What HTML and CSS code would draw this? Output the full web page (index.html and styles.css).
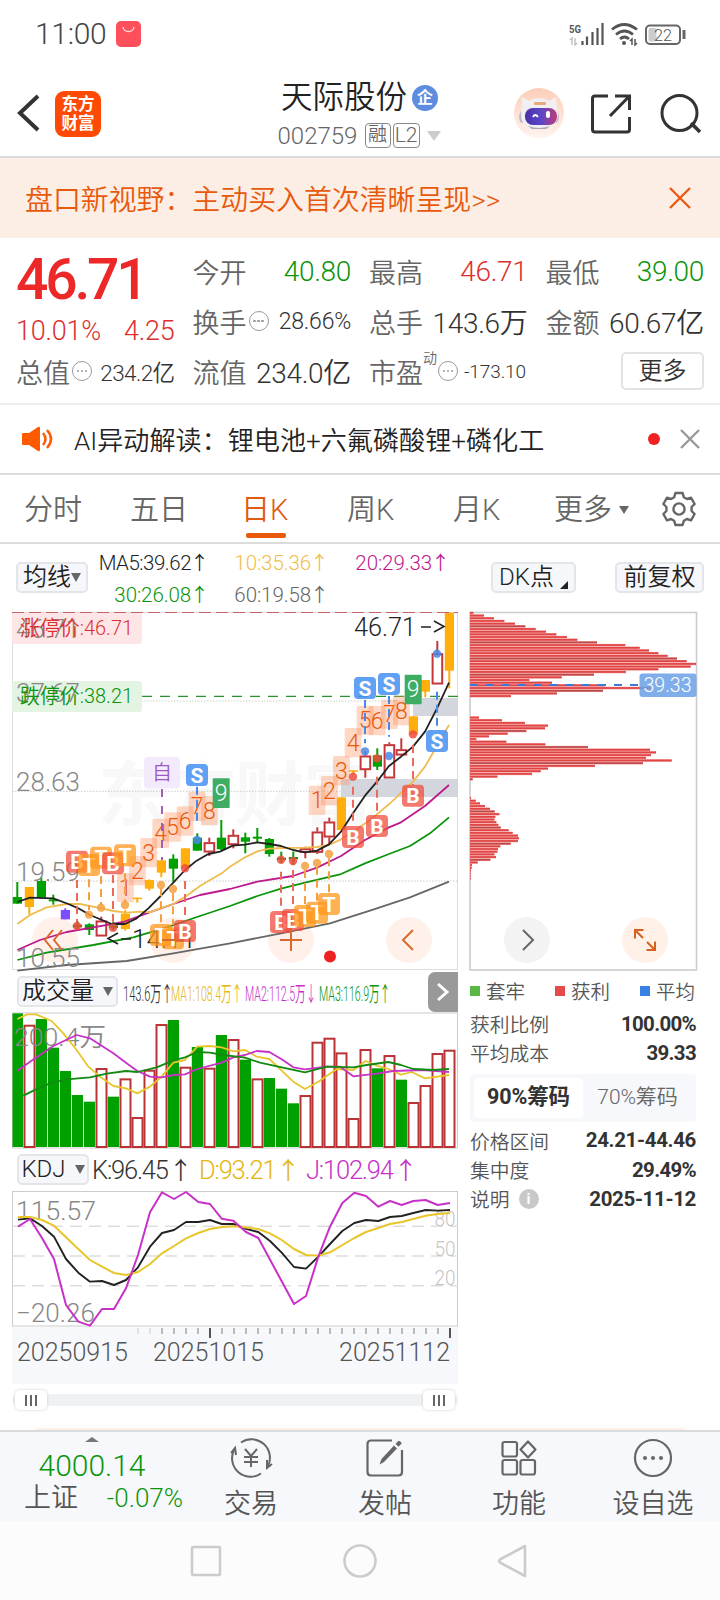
FILE: index.html
```html
<!DOCTYPE html>
<html lang="zh-CN">
<head>
<meta charset="utf-8">
<title>天际股份 002759</title>
<link rel="stylesheet" href="styles.css">
</head>
<body>
<div class="phone">
  <div class="status">
    <span class="clock">11:00</span>
    <svg class="bag" width="25" height="26" viewBox="0 0 25 26"><rect width="25" height="26" rx="5" fill="#fd4f5c"/><path d="M7 6c1 6 10 6 11 0" fill="none" stroke="#ffe3d8" stroke-width="1.3"/></svg>
    <svg class="signals" width="120" height="26" viewBox="568 21 120 26">
      <text x="569" y="33" font-size="11" font-weight="700" textLength="12" lengthAdjust="spacingAndGlyphs" fill="#555">5G</text>
      <path d="M570 40l2-2v7M575 38v7l2-2" stroke="#bbb" stroke-width="1.3" fill="none"/>
      <path d="M582.500 41v4M587 36.500v8.500M592.500 32v13M597.500 28v17M602.500 23v22" stroke="#555" stroke-width="2.200"/>
      <path d="M612 29.500q12-10 25 0M616 34.500q8.500-7 17 0M620 39q4.500-4 9 0" fill="none" stroke="#555" stroke-width="2.800"/><circle cx="624" cy="43" r="2" fill="#555"/>
      <path d="M630 41l2-2v6M635 39v6l2-2" stroke="#555" stroke-width="1.500" fill="none"/>
      <rect x="646" y="25.500" width="34" height="18.500" rx="4" fill="none" stroke="#666" stroke-width="2"/><rect x="648.500" y="28" width="8" height="13.500" rx="2" fill="#ccc"/><path d="M684 30v9" stroke="#666" stroke-width="3"/>
      <text x="654" y="40.500" font-size="17" textLength="18" lengthAdjust="spacingAndGlyphs" fill="#555">22</text>
    </svg>
  </div>

  <header class="header">
    <svg class="back" width="24" height="40" viewBox="16 93 24 40"><path d="M38 96L20 113l18 17" fill="none" stroke="#333" stroke-width="4"/></svg>
    <div class="logo">东方<br>财富</div>
    <div class="stock">
      <div class="stock-name">天际股份<span class="corp">企</span></div>
      <div class="stock-code"><span class="code">002759</span><span class="tag">融</span><span class="tag tag-l2">L2</span><i class="caret"></i></div>
    </div>
    <svg class="robot" width="50" height="50" viewBox="0 0 50 50">
      <defs><linearGradient id="rb" x2="0" y2="1"><stop stop-color="#fcceb8"/><stop offset="1" stop-color="#fff3ee"/></linearGradient><linearGradient id="rf"><stop stop-color="#4b2fa8"/><stop offset=".5" stop-color="#5a48c8"/><stop offset="1" stop-color="#c03a75"/></linearGradient></defs>
      <circle cx="25" cy="25" r="25" fill="url(#rb)"/><path d="M7 23q-4 6 0 12l5-1V22zM43 23q4 6 0 12l-5-1V22z" fill="#b9bac6"/>
      <path d="M8 12q-2-5 2-2l5 3q10-6 20 0l5-3q4-2 2 3l2 14q-1 14-19 14T7 26z" fill="#f1eff2"/><path d="M14 38q11 4 22 0l-4 3H18z" fill="#a8a8b4"/>
      <rect x="20" y="14" width="12" height="3" rx="1" fill="#e9aa78"/><rect x="11" y="20" width="32" height="17" rx="8" fill="url(#rf)"/><path d="M19 29q2-4 5 0" fill="none" stroke="#fff" stroke-width="1.800"/><rect x="32" y="23" width="4" height="7" rx="2" fill="#fff"/></svg>
    <svg class="share" width="42" height="42" viewBox="590 92 42 42"><path d="M608 95h-13q-2.500 0-2.500 2.500v31q0 2.500 2.500 2.500h32q2.500 0 2.500-2.500V116M615 95h14.500v14M629 95.500L610 115" fill="none" stroke="#333" stroke-width="3"/></svg>
    <svg class="search" width="42" height="42" viewBox="660 92 42 42"><circle cx="679.500" cy="112" r="17.500" fill="none" stroke="#333" stroke-width="3"/><path d="M691 122l9 9" stroke="#333" stroke-width="3.500"/></svg>
  </header>

  <div class="banner"><span>盘口新视野：主动买入首次清晰呈现&gt;&gt;</span><svg width="24" height="24" viewBox="0 0 24 24"><path d="M2 2l20 20M22 2L2 22" stroke="#e8590c" stroke-width="2.300"/></svg></div>

  <section class="quote">
    <div class="price"><div class="last">46.71</div><div class="change"><span>10.01%</span><span>4.25</span></div></div>
    <div class="cell"><label>今开</label><b class="green">40.80</b></div>
    <div class="cell"><label>最高</label><b class="red">46.71</b></div>
    <div class="cell"><label>最低</label><b class="green">39.00</b></div>
    <div class="cell"><label>换手</label><i class="more"></i><b class="small">28.66%</b></div>
    <div class="cell"><label>总手</label><b>143.6<em>万</em></b></div>
    <div class="cell"><label>金额</label><b>60.67<em>亿</em></b></div>
    <div class="cell"><label>总值</label><i class="more"></i><b class="small s2">234.2<em>亿</em></b></div>
    <div class="cell"><label>流值</label><b>234.0<em>亿</em></b></div>
    <div class="cell"><label>市盈</label><sup>动</sup><i class="more"></i><b class="tiny">-173.10</b></div>
    <div class="cell last-cell"><span class="more-btn">更多</span></div>
  </section>

  <div class="notice">
    <svg width="32" height="26" viewBox="0 0 32 26"><path d="M1 7h6l9-6q2-1 2 1v22q0 2-2 1l-9-6H1q-1 0-1-1V8q0-1 1-1z" fill="#ff5a00"/><path d="M21 7q5 6 0 12M25 4q8 9 0 18" fill="none" stroke="#ff5a00" stroke-width="2.500"/></svg>
    <span class="notice-text">AI异动解读：锂电池+六氟磷酸锂+磷化工</span>
    <i class="dot"></i>
    <svg class="notice-close" width="22" height="22" viewBox="0 0 22 22"><path d="M2 2l18 18M20 2L2 20" stroke="#999" stroke-width="2.400"/></svg>
  </div>

  <nav class="tabs">
    <span>分时</span><span>五日</span><span class="active">日K</span><span>周K</span><span>月K</span><span>更多<i></i></span>
    <svg width="36" height="36" viewBox="-18 -18 36 36"><path d="M-3.600-16H3.600L4.800-11.800L8-10L12-11.300L15.600-5L12.600-2V2L15.600 5L12 11.300L8 10L4.800 11.800L3.600 16H-3.600L-4.800 11.800L-8 10L-12 11.300L-15.600 5L-12.600 2V-2L-15.600-5L-12-11.300L-8-10L-4.800-11.800Z" fill="none" stroke="#666" stroke-width="2.400" stroke-linejoin="round"/><circle r="5.600" fill="none" stroke="#666" stroke-width="2.400"/></svg>
  </nav>

  <div class="ma-row">
    <span class="btn btn-ma">均线<i class="tri"></i></span>
    <div class="ma-grid">
      <span style="color:#222">MA5:39.62<u>↑</u></span><span style="color:#efbd4b">10:35.36<u>↑</u></span><span style="color:#bd1a8d">20:29.33<u>↑</u></span>
      <span style="color:#0b950b">30:26.08<u>↑</u></span><span style="color:#666">60:19.58<u>↑</u></span>
    </div>
    <span class="btn btn-dk">DK点<i></i></span><span class="btn btn-fq">前复权</span>
  </div>

  <main class="charts">
    <div class="left">
      <svg id="kline" width="460" height="362" viewBox="0 610 460 362"></svg>
      <div class="vol-head"><span class="btn btn-vol">成交量<i class="tri"></i></span>
        <div class="vol-values"><span class="v0">143.6万↑</span><span class="v1">MA1:108.4万↑</span><span class="v2">MA2:112.5万↓</span><span class="v3">MA3:116.9万↑</span></div>
        <span class="next"><svg width="14" height="20" viewBox="0 0 14 20"><path d="M2 2l9 8-9 8" fill="none" stroke="#fff" stroke-width="3"/></svg></span></div>
      <svg id="volume" width="460" height="137" viewBox="0 1012 460 137"></svg>
      <div class="kdj-head"><span class="btn btn-kdj">KDJ<i class="tri"></i></span><span class="k">K:96.45<u>↑</u></span><span class="d">D:93.21<u>↑</u></span><span class="j">J:102.94<u>↑</u></span></div>
      <svg id="kdj" width="460" height="137" viewBox="0 1190 460 137"></svg>
      <div class="dates"><svg id="ticks" width="446" height="12" viewBox="12 1327 446 12"></svg><div class="date-labels"><span>20250915</span><span>20251015</span><span>20251112</span></div></div>
      <div class="slider"><span class="handle"><i></i><i></i><i></i></span><span class="handle"><i></i><i></i><i></i></span></div>
    </div>
    <aside class="right">
      <svg id="chips" width="230" height="362" viewBox="468 610 230 362"></svg>
      <div class="legend"><span><i style="background:#5ab946"></i>套牢</span><span><i style="background:#e44a4a"></i>获利</span><span><i style="background:#3681e2"></i>平均</span></div>
      <div class="stat"><label>获利比例</label><b>100.00%</b></div>
      <div class="stat"><label>平均成本</label><b>39.33</b></div>
      <div class="toggle"><span class="on">90%筹码</span><span>70%筹码</span></div>
      <div class="stat"><label>价格区间</label><b class="range">24.21-44.46</b></div>
      <div class="stat"><label>集中度</label><b>29.49%</b></div>
      <div class="stat"><label>说明<i class="info">i</i></label><b class="range">2025-11-12</b></div>
    </aside>
  </main>
  <div class="peek"></div>

  <footer class="toolbar">
    <div class="index"><i></i><div class="idx-value">4000.14</div><div class="idx-row"><span>上证</span><b>-0.07%</b></div></div>
    <div class="tool"><svg width="46" height="42" viewBox="-23 -21 46 42"><g fill="none" stroke="#666" stroke-width="2"><path d="M-10-15.500A18.500 18.500 0 0 1 17 8M10 15.500A18.500 18.500 0 0 1-17-8"/><path d="M-20-5l4-5 1 7M21 6l-5 4 0-8"/><path d="M-6-9L0-2 6-9M0-2V9M-7-1H7M-7 4H7"/></g></svg><span>交易</span></div>
    <div class="tool"><svg width="46" height="42" viewBox="-23 -21 46 42"><path d="M7-17.500H-14q-3.500 0-3.500 3.500v28q0 3.500 3.500 3.500H13.500q3.500 0 3.500-3.500V-8" fill="none" stroke="#666" stroke-width="2.200"/><path d="M-5.500 6.500l2-5.500L9-12.500l3 3L-1 4zM10.500-14l3-3.200q2 0 3.300 2.500l-3.200 3.500z" fill="#666"/></svg><span>发帖</span></div>
    <div class="tool"><svg width="46" height="42" viewBox="-23 -21 46 42"><g fill="none" stroke="#666" stroke-width="2.200"><rect x="-16.500" y="-16" width="14.500" height="14.500" rx="2"/><rect x="-16.500" y="2" width="14.500" height="14.500" rx="2"/><rect x="1.500" y="2" width="14.500" height="14.500" rx="2"/><path d="M9-16.500l7.500 8L9-.5 1.500-8.500z" stroke-linejoin="round"/></g></svg><span>功能</span></div>
    <div class="tool"><svg width="46" height="42" viewBox="-23 -21 46 42"><circle r="18" fill="none" stroke="#666" stroke-width="2.200"/><circle cx="-8" r="2" fill="#666"/><circle r="2" fill="#666"/><circle cx="8" r="2" fill="#666"/></svg><span>设自选</span></div>
  </footer>
  <div class="sysnav"><svg width="720" height="79" viewBox="0 1521 720 79"><g fill="none" stroke="#ccc" stroke-width="2.600" stroke-linejoin="round"><rect x="192" y="1547" width="28" height="28" rx="1"/><circle cx="360" cy="1561" r="15.500"/><path d="M525 1546v30l-25-13.500q-2-1.500 0-3z"/></g></svg></div>
</div>
<script src="charts.js"></script>
</body>
</html>
```

FILE: styles.css
```css
* { box-sizing: border-box; }
body { margin: 0; background: #fff; }
.phone { width: 720px; height: 1600px; overflow: hidden; background: #fff; color: #333; font-family: Roboto, "Noto Sans CJK SC", sans-serif; font-weight: 350; display: flex; flex-direction: column; }
svg { display: block; flex: none; }
svg text { font-family: Roboto, "Noto Sans CJK SC", sans-serif; }
i, em { font-style: normal; }
b { font-weight: 350; }
u { text-decoration: none; }

.status { height: 68px; padding: 0 32px 0 35px; display: flex; align-items: center; flex: none; }
.clock { font-size: 30px; line-height: 30px; width: 74px; letter-spacing: -.3px; color: #444; }
.bag { margin-left: 7px; }
.signals { margin-left: auto; }

.header { height: 90px; border-bottom: 2px solid #d9dbde; display: flex; align-items: flex-start; padding: 25px 18px 0 16px; flex: none; }
.logo { width: 46px; height: 46px; margin: -2px 0 0 15px; border-radius: 9px; background: #ff4a05; color: #fff; font-weight: 700; font-size: 16.500px; line-height: 19px; padding-top: 4px; text-align: center; }
.stock { width: 200px; margin: -14px 0 0 158px; display: flex; flex-direction: column; align-items: center; flex: none; }
.stock-name { display: flex; align-items: center; font-size: 31.500px; line-height: 38px; color: #222; padding-left: 1px; }
.corp { width: 26px; height: 26px; border-radius: 50%; background: #5d8de0; color: #fff; font-size: 16px; font-weight: 700; line-height: 25px; text-align: center; margin-left: 5px; }
.stock-code { display: flex; align-items: center; height: 37px; font-size: 24px; color: #666; }
.code { width: 82px; }
.tag { width: 26px; height: 25px; border: 1.500px solid #888; border-radius: 4px; font-size: 19px; line-height: 22px; text-align: center; margin-left: 5px; }
.tag-l2 { width: 27px; margin-left: 2px; font-size: 21px; line-height: 23px; }
.caret { border: 7.500px solid transparent; border-top: 10px solid #ccc; border-bottom: 0; margin-left: 7px; }
.robot { margin: -5px 0 0 auto; }
.share { margin-left: 26px; }
.search { margin-left: 28px; }

.banner { height: 80px; background: #fdeee5; padding: 0 28px 0 25px; display: flex; align-items: center; justify-content: space-between; font-size: 27.900px; color: #e8590c; flex: none; }

.quote { height: 167px; border-bottom: 2px solid #eee; padding: 8px 16px 0 16px; display: grid; grid-template-columns: repeat(4, 158.500px); grid-template-rows: repeat(3, 50px); column-gap: 18px; flex: none; }
.price { grid-row: span 2; color: #ec2828; }
.last { font-size: 57px; line-height: 67px; font-weight: 500; letter-spacing: -3.200px; }
.change { display: flex; justify-content: space-between; font-size: 27px; line-height: 36px; letter-spacing: -.2px; color: #dc3030; }
.cell { display: flex; align-items: center; font-size: 27px; color: #666; white-space: nowrap; }
.cell b { margin-left: auto; color: #333; font-size: 28px; letter-spacing: -.3px; }
.cell b.small { font-size: 23px; letter-spacing: -.2px; }
.cell b.s2 { font-size: 22.500px; letter-spacing: -.6px; }
.cell b.tiny { font-size: 19px; margin-left: 6px; letter-spacing: -.1px; }
.cell b.green { color: #0b950b; }
.cell b.red { color: #dc3030; }
.more { width: 20px; height: 20px; border: 1.600px solid #999; border-radius: 50%; margin-left: 2px; display: flex; align-items: center; justify-content: center; }
.more::after { content: ""; width: 2.500px; height: 2.500px; border-radius: 50%; background: #999; box-shadow: -4px 0 #999, 4px 0 #999; }
.cell sup { font-size: 14px; line-height: 16px; align-self: flex-start; margin-top: 4px; }
.cell sup + .more { margin-left: 1px; }
.last-cell { justify-content: flex-end; }
.more-btn { width: 83px; height: 38px; border: 2px solid #e3e3e3; border-radius: 5px; font-size: 24px; line-height: 34px; text-align: center; color: #333; }

.notice { height: 70px; border-bottom: 2px solid #dcdcdc; padding: 0 19px 0 22px; display: flex; align-items: center; flex: none; }
.notice-text { font-size: 26.100px; margin-left: 20px; color: #222; }
.dot { width: 12px; height: 12px; border-radius: 50%; background: #ee2222; margin-left: auto; }
.notice-close { margin-left: 19px; }

.tabs { height: 69px; border-bottom: 2px solid #dcdcdc; position: relative; padding: 0 23px 0 24px; display: flex; align-items: center; font-size: 29px; color: #666; flex: none; }
.tabs span { line-height: 66px; height: 67px; width: 106px; padding-top: 2px; display: flex; align-items: center; }
.tabs .active { color: #e05a10; position: relative; padding-left: 5px; }
.tabs span:nth-child(4) { padding-left: 5px; }
.tabs span:nth-child(5) { padding-left: 5px; }
.tabs .active::after { content: ""; position: absolute; left: 10px; bottom: 4px; width: 40px; height: 5px; border-radius: 2px; background: #e8590c; }
.tabs span i { border: 5px solid transparent; border-top: 8px solid #666; border-bottom: 0; margin-left: 7px; }
.tabs svg { margin-left: auto; }

.ma-row { height: 66px; display: flex; align-items: flex-start; padding: 0 16px; flex: none; }
.btn { height: 31px; background: #f6f7fa; border: 2px solid #e3e5e9; border-radius: 5px; color: #222; font-size: 24px; line-height: 27px; display: flex; align-items: center; justify-content: center; white-space: nowrap; flex: none; }
.tri { border: 5px solid transparent; border-top: 9px solid #666; border-bottom: 0; }
.btn-ma { width: 72px; margin-top: 18px; }
.ma-grid { width: 375px; margin-left: 9px; padding-top: 2px; display: grid; grid-template-columns: 108px 120px 121px; grid-auto-rows: 32px; align-items: center; font-size: 20.500px; line-height: 30px; letter-spacing: -.1px; text-align: right; white-space: nowrap; }
.ma-grid span:first-child { letter-spacing: -.5px; margin-left: -6px; }
.ma-grid u { display: inline-block; width: 15px; font-size: 19px; text-align: right; font-family: "Noto Sans CJK SC"; letter-spacing: 0; margin-left: -1px; }
.btn-dk { width: 85px; margin: 18px 0 0 19px; }
.btn-dk i { border-left: 8px solid transparent; border-bottom: 8px solid #222; margin: 14px 0 0 6px; }
.btn-fq { width: 89px; margin: 18px 0 0 39px; }

.charts { height: 819px; display: flex; flex: none; }
.left { width: 460px; flex: none; }
.right { width: 230px; margin-left: 8px; }
.vol-head { height: 40px; display: flex; align-items: center; padding: 0 2px 0 17px; }
.btn-vol { width: 101px; margin-top: -1px; }
.btn-vol .tri, .btn-kdj .tri { margin-left: 9px; }
.vol-values { flex: 1; display: grid; grid-template-columns: 48px 74px 74px 80px; padding-left: 5px; font-size: 21px; }
.vol-values span { white-space: nowrap; transform-origin: 0 50%; width: 0; transform: scaleX(.505); }
.vol-values .v0 { color: #333; transform: scaleX(.53); }
.v1 { color: #e3b510; }
.v2 { color: #c831c8; }
.v3 { color: #0b950b; }
.next { width: 30px; height: 40px; background: #999; border-radius: 7px 0 0 7px; display: flex; align-items: center; justify-content: center; }
.kdj-head { height: 41px; display: flex; align-items: center; padding-left: 17px; font-size: 25.500px; }
.btn-kdj { width: 72px; }
.kdj-head u { display: inline-block; width: 20px; font-family: "Noto Sans CJK SC"; font-size: 24px; line-height: 24px; margin-left: 1px; }
.kdj-head > span:not(.btn) { line-height: 30px; white-space: nowrap; letter-spacing: -1.200px; flex: none; }
.k { margin-left: 3px; width: 107px; }
.d { color: #e3b510; width: 107px; }
.j { color: #c831c8; }
.dates { width: 446px; height: 57px; margin-left: 12px; background: #f7f8fb; }
.date-labels { display: flex; padding: 0 8px 0 5px; font-size: 25px; line-height: 27px; color: #555; }
.date-labels span:nth-child(2) { margin-left: 25px; }
.date-labels span:last-child { margin-left: auto; }
.slider { width: 446px; height: 12px; margin: 10px 0 0 12px; background: #f0f1f5; border-radius: 6px; display: flex; align-items: center; justify-content: space-between; padding: 0 3px; }
.handle { width: 32px; height: 20px; background: #fff; border-radius: 5px; box-shadow: 0 0 3px #ccc; display: flex; align-items: center; justify-content: center; gap: 3px; }
.handle i { width: 2px; height: 11px; background: #666; }

.legend { height: 37px; padding: 0 3px 0 2px; display: flex; align-items: center; justify-content: space-between; font-size: 19.500px; color: #555; }
.legend span { display: flex; align-items: center; gap: 6px; }
.legend i { width: 10px; height: 10px; }
.stat { height: 29.300px; padding: 0 2px; display: flex; align-items: center; justify-content: space-between; font-size: 19.800px; color: #555; }
.stat label { display: flex; align-items: center; }
.stat b { font-size: 20.500px; font-weight: 700; letter-spacing: -.7px; color: #333; }
.stat b.range { letter-spacing: -.35px; }
.toggle { width: 226px; height: 48px; margin: 6px 0 4px 2px; background: #f7f8fb; border-radius: 4px; padding: 4px; display: flex; align-items: center; font-size: 21px; letter-spacing: -.1px; color: #666; }
.toggle span { flex: 1; height: 40px; line-height: 38px; text-align: center; }
.toggle .on { background: #fff; border-radius: 4px; font-size: 21.500px; font-weight: 700; color: #333; }
.info { width: 20px; height: 20px; border-radius: 50%; background: #c8c8c8; color: #fff; font-size: 15px; line-height: 20px; font-weight: 700; text-align: center; margin-left: 9px; }

.peek { position: absolute; left: 28px; top: 1428px; width: 664px; height: 12px; background: #fdeee5; border-radius: 14px 14px 0 0; }
.toolbar { position: relative; height: 91px; border-top: 2px solid #d9dbde; background: #f7f8fb; display: flex; flex: none; margin-top: 1px; }
.index { width: 184px; display: flex; flex-direction: column; align-items: center; color: #0b950b; }
.index > i { border: 7px solid transparent; border-bottom: 5px solid #777; border-top: 0; margin-top: 5px; }
.idx-value { font-size: 30px; line-height: 40px; margin-top: 4px; letter-spacing: 0; }
.idx-row { width: 184px; display: flex; align-items: center; justify-content: space-between; padding: 0 1px 0 24px; line-height: 27px; margin-top: -1px; }
.idx-row span { font-size: 27px; color: #555; }
.idx-row b { font-size: 26px; letter-spacing: 0; }
.tool { width: 134px; display: flex; flex-direction: column; align-items: center; font-size: 27px; line-height: 38px; color: #555; padding-top: 5px; }
.tool span { margin-top: 6px; }
.sysnav { height: 79px; background: #fcfcfc; flex: none; }
```

FILE: charts.js
```js
// Chart coordinates are stored in thirds of a pixel, with one origin per panel.
const P = (ox, oy) => ({ x: v => +(ox + v / 3).toFixed(2), y: v => +(oy + v / 3).toFixed(2) });
const fill = (id, parts) => { document.getElementById(id).innerHTML = parts.join(''); };
const rect = (x, y, w, h, f, extra = '') => `<rect x="${x}" y="${y}" width="${w}" height="${h}" fill="${f}" ${extra}/>`;
const line = (x1, y1, x2, y2, s, extra = '') => `<path d="M${x1} ${y1}L${x2} ${y2}" stroke="${s}" fill="none" ${extra}/>`;
const text = (x, y, s, size, f, len, extra = '') => `<text x="${x}" y="${y}" font-size="${size}" fill="${f}" ${len ? `textLength="${len}" lengthAdjust="spacingAndGlyphs"` : ''} ${extra}>${s}</text>`;
const dot = (x, y, r, f) => `<circle cx="${x}" cy="${y}" r="${r}" fill="${f}"/>`;

function poly(p, pts, color, w = 1.8) {
  const n = pts.trim().split(/\s+/).map(t => t.split(',').map(Number));
  return `<polyline points="${n.map(([a, b]) => p.x(a) + ',' + p.y(b)).join(' ')}" fill="none" stroke="${color}" stroke-width="${w}" stroke-linejoin="round"/>`;
}

// ---- Daily candles ----
const K = P(0, 600);
const out = [];
const G = '#00a000', Y = '#ffae0c', R = '#c4383c', V = '#7c4dff';
out.push(rect(12.5, 612.5, 445, 357, 'none', 'stroke="#ddd"'));
out.push(`<text x="98" y="820" font-size="70" font-weight="700" fill="#f8f8f8" textLength="275">东方财富</text>`);
[701, 791.3, 881].forEach(y => out.push(line(12, y, 458, y, '#ccc', 'stroke-dasharray="1.5 1.5"')));
out.push(rect(413, 698, 45, 18, '#d3d7dd'), rect(341, 779, 117, 18, '#d3d7dd'));
[55, 173, 291, 409].forEach(x => out.push(dot(x, 940, 23, '#fff1ea')));

const candles = [
  [G, 891, 911, 846, 911], [Y, 861, 921, 861, 944], [G, 843, 893, 832, 893], [G, 898, 904, 884, 914],
  [V, 930, 958, 925, 958], [G, 974, 982, 962, 990], [G, 973, 990, 970, 1005], ['h', 962, 1009, 950, 1009],
  [G, 976, 984, 965, 992], [Y, 941, 987, 930, 992], [Y, 893, 896, 893, 908], [Y, 840, 866, 838, 872],
  [Y, 781, 818, 781, 832], [G, 776, 806, 763, 845], [Y, 745, 803, 745, 803], [G, 713, 752, 700, 752],
  ['h', 727, 757, 713, 768], [G, 713, 748, 660, 750], ['h', 705, 735, 688, 745], [G, 712, 725, 698, 760],
  [G, 710, 716, 684, 728], [G, 717, 762, 714, 770], [G, 773, 780, 755, 790], [G, 771, 778, 755, 795],
  ['h', 745, 758, 740, 775], ['h', 695, 758, 682, 762], ['h', 665, 712, 653, 735], [Y, 592, 690, 592, 690],
  [Y, 511, 515, 511, 525], ['h', 467, 510, 455, 533], [G, 466, 500, 445, 510], ['h', 433, 535, 427, 535],
  ['h', 448, 466, 415, 468], [Y, 349, 403, 349, 403], [Y, 240, 275, 240, 292], ['h', 160, 253, 123, 253], [Y, 38, 212, 38, 265]
];
candles.forEach(([c, top, bot, hi, lo], i) => {
  const x = 17.3 + 12 * i;
  if (c === 'h') {
    out.push(line(x, K.y(hi), x, K.y(top), R, 'stroke-width="2"'), line(x, K.y(bot), x, K.y(lo), R, 'stroke-width="2"'));
    out.push(rect(x - 4.7, K.y(top) + .8, 9.6, Math.max(2, (bot - top) / 3 - 1.6), '#fff', `stroke="${R}" stroke-width="2"`));
  } else {
    out.push(line(x, K.y(hi), x, K.y(lo), c, 'stroke-width="2"'));
    out.push(rect(x - 4.5, K.y(top), 9.2, Math.max(1.5, (bot - top) / 3), c));
  }
});
out.push(poly(K, '52,1112 200,1095 380,1083 520,1060 690,1030 843,1000 990,970 1110,932 1230,892 1347,845', '#666'));
out.push(poly(K, '52,1080 140,1058 280,1035 400,1012 500,982 600,948 690,918 772,888 843,866 915,848 1023,822 1095,790 1167,762 1230,738 1290,700 1347,652', '#0b950b'));
out.push(poly(K, '52,1050 120,1020 200,996 280,982 370,966 440,940 520,912 600,885 690,867 772,845 879,828 951,803 1023,768 1095,720 1167,682 1203,667 1275,618 1347,555', '#bd1a8d'));
out.push(poly(K, '52,972 90,945 140,922 200,912 240,912 290,922 340,933 380,938 420,935 450,937 480,925 520,912 560,887 600,858 630,840 665,820 690,800 735,772 772,754 808,746 850,744 915,743 951,741 987,735 1023,718 1059,695 1110,660 1170,610 1239,545 1275,500 1347,375', '#f0bc50'));
out.push(poly(K, '52,906 90,893 160,895 205,912 235,925 270,945 335,972 375,972 410,955 445,925 482,888 520,848 555,810 590,782 625,762 660,755 698,737 735,734 772,727 808,732 843,738 879,750 915,757 951,752 987,733 1023,695 1059,640 1095,587 1131,545 1167,498 1203,470 1239,440 1275,395 1311,325 1347,248', '#222'));

// Limit prices and the price axis
out.push(line(12, 612.5, 458, 612.5, '#c46464', 'stroke-dasharray="12 5"'));
out.push(line(142, 696.3, 458, 696.3, '#2b932b', 'stroke-dasharray="10 8" stroke-width="1.3"'));
out.push(rect(12, 613, 130, 31, '#ffe6e6', 'rx="3"'), rect(12, 681, 130, 31, '#e3f4e3', 'rx="3"'));
[[637.5, '46.71'], [701.5, '37.67'], [791, '28.63'], [880.5, '19.59'], [967, '10.55']]
  .forEach(([y, s]) => out.push(text(16, y, s, 26, '#888', 64, 'font-weight="350"')));
out.push(text(20, 634.5, '涨停价:46.71', 21, '#dc3030', 113), text(20, 702.5, '跌停价:38.21', 21, '#0b950b', 113));

// Nine-count numbers
[[351, 819, 1], [387, 768, 2], [421, 714, 3], [457, 656, 4], [493, 637, 5], [530, 619, 6], [566, 575, 7], [603, 588, 8],
 [926, 557, 1], [963, 528, 2], [999, 468, 3], [1034, 384, 4], [1070, 317, 5], [1106, 318, 6], [1143, 299, 7], [1179, 288, 8]]
  .forEach(([x, y, n]) => out.push(rect(K.x(x), K.y(y), 16.8, 29.3, 'rgba(255,145,95,.36)', 'rx="1.5"'), text(K.x(x) + 8.4, K.y(y) + 22.5, n, 23, '#e8590c', 0, 'font-weight="350" text-anchor="middle"')));
[[638, 535], [1214, 224]].forEach(([x, y]) => out.push(rect(K.x(x), K.y(y), 17, 29.6, '#3fac63', 'rx="1"'), text(K.x(x) + 8.5, K.y(y) + 22.5, 9, 23, '#fff', 0, 'text-anchor="middle"')));

// Low and high callouts
out.push(text(354, 635.5, '46.71', 25.5, '#222', 62, 'font-weight="350"'), `<path d="M421 627h10M434 621l10 5.500-10 5.500" fill="none" stroke="#222" stroke-width="1.600"/>`);
out.push(text(132, 947.5, '14.11', 25.5, '#222', 64, 'font-weight="350"'), `<path d="M118 933l-10 5.500 10 5.500M121 939h10" fill="none" stroke="#222" stroke-width="1.600"/>`);

// Trade markers: [type, x, label y, dash from, dash to, dot y]
const tone = { B: ['rgba(240,76,62,.75)', '#ee6a58'], T: ['rgba(255,152,28,.75)', '#f5a040'], S: ['rgba(74,148,245,.88)', '#4a88e8'] };
[['B', 231, 785, 840, 965, 978], ['T', 267, 795, 838, 930, 944], ['T', 303, 773, 828, 915, 923], ['B', 339, 790, 825, 965, 983], ['T', 375, 766, 820, 905, 915],
 ['S', 591, 525, 560, 675, 720], ['T', 483, 1005, 865, 970, 855], ['T', 519, 1015, 880, 975, 867], ['B', 555, 993, 843, 960, 805],
 ['B', 843, 966, 815, 925, 779], ['B', 879, 960, 810, 925, 783], ['T', 915, 948, 810, 915, 798], ['T', 951, 938, 800, 905, 789], ['T', 987, 912, 775, 880, 762],
 ['B', 1059, 711, 560, 675, 530], ['B', 1131, 678, 530, 640, 475], ['B', 1239, 587, 435, 555, 403],
 ['S', 1095, 264, 300, 430, 454], ['S', 1167, 252, 288, 410, 468], ['S', 1311, 423, 275, 390, 161]]
  .forEach(([t, x, ly, a, b, dy]) => {
    const cx = K.x(x), cy = K.y(ly), [bg, c] = tone[t];
    out.push(line(cx, K.y(a), cx, K.y(b), c, 'stroke-width="2" stroke-dasharray="8 5"'), `<g opacity=".85">${dot(cx, K.y(dy), 4.2, t === 'B' ? '#f04c3e' : c)}</g>`);
    out.push(rect(cx - 11, cy - 11, 22, 22, bg, 'rx="4"'), text(cx, cy + 7.5, t, 21, '#fff', 0, 'font-weight="700" text-anchor="middle"'));
  });
out.push(rect(144, 757, 36, 31.5, '#f3eafc', 'rx="4"'), text(152, 780, '自', 20, '#9b59c6', 0), line(162, 789, 162, 860, '#a35fb5', 'stroke-width="2" stroke-dasharray="8 9"'));
out.push(`<path d="M53 930L45 940l8 10M62 930L54 940l8 10M162 940h22M280 940h22M291 929v22M413 930l-10 10 10 10" fill="none" stroke="#d9692c" stroke-width="2"/>`);
out.push(dot(330, 956.5, 6, '#ee2222'));
fill('kline', out);

// ---- Volume ----
const Q = P(0, 970), vol = [];
vol.push(rect(12.5, 1013, 445, 135, 'none', 'stroke="#ccc"'));
'G130 R168 G147 G233 G303 G375 G395 R298 G380 R329 R445 R303 R166 G150 R294 G231 R297 G195 R211 G269 R329 G324 G356 G400 R379 R219 R207 R251 R448 R241 G295 R259 G329 R400 R349 R253 R243'.split(' ').forEach((s, i) => {
  const top = Q.y(+s.slice(1)), x = i === 0 ? 12.5 : 17.3 + 12 * i - 5.5, w = i === 0 ? 10.5 : 11.2;
  vol.push(s[0] === 'G' ? rect(x, top, w, 1147 - top, G) : rect(x + .7, top - .3, w - 1.2, 1147.3 - top, '#fff', 'stroke="#b93236" stroke-width="2"'));
});
vol.push(text(14, 1045.5, '200.4万', 26.5, '#888', 92, 'font-weight="350"'));
vol.push(poly(Q, '52,147 82,133 108,133 155,153 190,190 230,240 265,290 300,320 340,348 378,355 412,370 450,350 485,320 520,278 555,270 592,230 630,228 665,232 700,244 735,240 770,260 808,267 845,302 880,335 915,357 955,335 1010,297 1060,300 1097,273 1130,287 1165,297 1203,314 1235,306 1275,325 1347,315', '#e8c52a'));
vol.push(poly(Q, '52,303 90,275 160,228 230,195 270,205 340,250 378,278 412,303 450,320 485,322 520,315 555,313 592,297 665,278 700,262 735,255 770,243 808,246 845,268 880,292 915,298 980,290 1020,290 1060,319 1130,311 1180,303 1270,300 1347,306', '#c831c8'));
vol.push(poly(Q, '70,377 108,358 150,340 200,328 270,322 320,311 378,303 412,306 470,292 520,271 555,262 592,246 630,248 670,255 735,263 780,278 845,292 915,307 980,290 1060,292 1100,285 1165,276 1203,285 1240,297 1300,300 1347,297', '#128a12'));
fill('volume', vol);

// ---- KDJ ----
const J = P(0, 1180), kdj = [];
kdj.push(rect(12.5, 1191.5, 445, 134.500, 'none', 'stroke="#ccc"'));
[[139, 80], [228, 50], [317, 20]].forEach(([y, n]) => kdj.push(line(13, J.y(y), 458, J.y(y), '#ddd', 'stroke-width="1.5" stroke-dasharray="12 7"'), text(434.5, J.y(y) - .5, n, 20, '#c4c4c4', 21, 'font-weight="350"')));
kdj.push(text(16, 1219.5, '115.57', 26, '#888', 80, 'font-weight="350"'), text(16, 1321.5, '−20.26', 26, '#888', 79, 'font-weight="350"'));
kdj.push(poly(J, '54,119 90,115 126,138 162,170 198,237 235,278 270,305 306,303 342,315 378,300 414,262 450,200 486,159 522,150 558,126 595,126 630,120 665,132 700,132 735,146 775,156 810,183 845,218 882,261 918,266 955,230 990,192 1027,153 1063,129 1098,120 1135,123 1170,111 1205,108 1240,99 1277,90 1313,92 1350,90', '#222', 1.9));
kdj.push(poly(J, '54,111 90,111 126,120 162,137 198,172 235,207 270,240 306,260 342,279 378,285 414,276 450,252 486,220 522,198 558,175 595,159 630,147 665,141 710,139 775,147 810,160 845,180 882,207 918,225 955,227 990,217 1063,174 1098,156 1135,144 1170,132 1205,126 1277,107 1313,102 1350,99', '#e8c52a', 2));
kdj.push(poly(J, '54,140 90,117 126,174 162,237 198,375 235,425 270,437 306,387 342,387 378,325 414,225 450,97 486,37 522,57 558,36 595,66 630,72 665,116 700,122 738,156 775,174 882,372 918,348 955,230 990,140 1027,69 1063,38 1098,48 1135,80 1170,63 1205,75 1240,63 1277,60 1313,75 1350,69', '#c831c8', 2));
fill('kdj', kdj);

const ticks = [];
for (let i = 0; i < 27; i++) {
  const x = 138 + i * 12, major = i === 6 || i === 26;
  ticks.push(line(x, 1328, x, major ? 1338 : 1334, major ? '#555' : i < 2 ? '#ddd' : '#aaa', `stroke-width="${major ? 2 : 1.6}"`));
}
fill('ticks', ticks);

// ---- Chip distribution: [first row, bar end of each row] ----
const C = P(460, 600), chips = [];
chips.push(rect(470, 612.5, 226.5, 357.5, 'none', 'stroke="#ccc" stroke-width="1.6"'));
const groups = [
  [0, '40 72 102 133 165 196 227 258 289 321 352 411 496 539 567 595 623 651 680 708 692 595 498 402 305 208 276 435 573 429 291 153'],
  [39, '57 126 195 264 255 199 143 87 49 139 256 384 570 588 573 558 635 549 405 264 242 216 112 38'],
  [69, '33 47 60 75 90 104 118 106 103 109 115 122 146 158 174 177 174 152 121 114 112 103 108 91 53 36 35 33 32 32 32']
];
groups.forEach(([row, s]) => s.split(' ').forEach((v, i) => {
  const y = 612.7 + (row + i) * 2.683, w = (v - 30) / 3;
  chips.push(rect(470, y - 1, w, 2.5, '#f58a88'), rect(470, (y - .6).toFixed(2), w, 1.6, (row + i) % 3 === 2 && i % 2 ? '#b84a4a' : '#dd4545'));
}));
chips.push(line(470, 685, 640, 685, '#3f78d8', 'stroke-width="2" stroke-dasharray="8 8"'));
chips.push(rect(639.5, 673.5, 57, 23.5, 'rgba(105,160,230,.85)', 'rx="3"'), text(643.5, 692, '39.33', 20.500, '#fff', 48));
chips.push(dot(527, 940, 23, '#f3f3f3'), dot(645, 940, 23, '#fff0e8'));
chips.push('<path d="M523 930l10 10-10 10" fill="none" stroke="#666" stroke-width="2"/>');
chips.push('<path d="M643.500 930H635v8.500M635 930l8 8M646.500 950H655v-8.500M655 950l-8-8" fill="none" stroke="#d9601c" stroke-width="2"/>');
fill('chips', chips);
```
